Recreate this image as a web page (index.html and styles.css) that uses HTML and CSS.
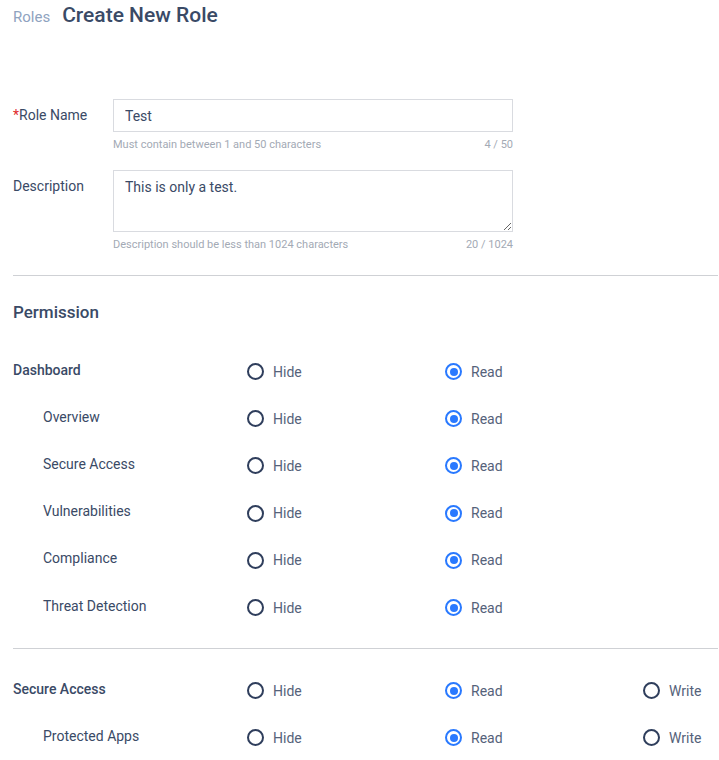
FILE: index.html
```html
<!DOCTYPE html>
<html>
<head>
<meta charset="utf-8">
<link rel="stylesheet" href="styles.css">
</head>
<body>
<div class="page">
  <div class="crumbs">
    <span class="crumb-link">Roles</span>
    <h1 class="title">Create New Role</h1>
  </div>

  <form class="form">
    <div class="field">
      <label class="label"><span class="req">*</span>Role Name</label>
      <div class="control">
        <input class="input" type="text" value="Test">
        <div class="help"><span>Must contain between 1 and 50 characters</span><span>4 / 50</span></div>
      </div>
    </div>
    <div class="field field-desc">
      <label class="label">Description</label>
      <div class="control">
        <textarea class="textarea">This is only a test.</textarea>
        <div class="help"><span>Description should be less than 1024 characters</span><span>20 / 1024</span></div>
      </div>
    </div>
  </form>

  <div class="divider"></div>

  <h2 class="perm-title">Permission</h2>

  <div class="perm-group">
    <div class="perm-row">
      <div class="perm-label parent">Dashboard</div>
      <div class="opt"><span class="radio"></span>Hide</div>
      <div class="opt"><span class="radio on"></span>Read</div>
    </div>
    <div class="perm-row">
      <div class="perm-label child">Overview</div>
      <div class="opt"><span class="radio"></span>Hide</div>
      <div class="opt"><span class="radio on"></span>Read</div>
    </div>
    <div class="perm-row">
      <div class="perm-label child">Secure Access</div>
      <div class="opt"><span class="radio"></span>Hide</div>
      <div class="opt"><span class="radio on"></span>Read</div>
    </div>
    <div class="perm-row">
      <div class="perm-label child">Vulnerabilities</div>
      <div class="opt"><span class="radio"></span>Hide</div>
      <div class="opt"><span class="radio on"></span>Read</div>
    </div>
    <div class="perm-row">
      <div class="perm-label child">Compliance</div>
      <div class="opt"><span class="radio"></span>Hide</div>
      <div class="opt"><span class="radio on"></span>Read</div>
    </div>
    <div class="perm-row">
      <div class="perm-label child">Threat Detection</div>
      <div class="opt"><span class="radio"></span>Hide</div>
      <div class="opt"><span class="radio on"></span>Read</div>
    </div>
  </div>

  <div class="divider divider-group"></div>

  <div class="perm-group">
    <div class="perm-row">
      <div class="perm-label parent">Secure Access</div>
      <div class="opt"><span class="radio"></span>Hide</div>
      <div class="opt"><span class="radio on"></span>Read</div>
      <div class="opt"><span class="radio"></span>Write</div>
    </div>
    <div class="perm-row">
      <div class="perm-label child">Protected Apps</div>
      <div class="opt"><span class="radio"></span>Hide</div>
      <div class="opt"><span class="radio on"></span>Read</div>
      <div class="opt"><span class="radio"></span>Write</div>
    </div>
  </div>
</div>
</body>
</html>
```

FILE: styles.css
```css
* { box-sizing: border-box; }
html, body { margin: 0; padding: 0; background: #fff; }
body {
  font-family: Roboto, "Liberation Sans", sans-serif;
  color: #3a4a66;
  font-size: 14px;
  overflow: hidden;
}
.page { padding: 0 1px 0 13px; }

.crumbs {
  display: flex;
  align-items: baseline;
  gap: 12px;
  height: 32px;
  padding-top: 3px;
}
.crumb-link { font-size: 15px; color: #8fa3bf; }
.title { margin: 0; font-size: 21px; font-weight: 500; color: #3a4a66; }

.form { padding-top: 67px; }
.field { display: flex; align-items: flex-start; }
.field-desc { margin-top: 13px; }
.label {
  width: 100px;
  flex: none;
  font-size: 14px;
  line-height: 33px;
  color: #3a4a66;
}
.req { color: #e02b2b; }
.control { width: 400px; }
.input, .textarea {
  display: block;
  width: 100%;
  border: 1px solid #d9dbe0;
  border-radius: 0;
  font-family: Roboto, "Liberation Sans", sans-serif;
  font-size: 14px;
  color: #3a4a66;
  padding: 0 11px;
  outline: none;
  background: #fff;
}
.input { height: 33px; }
.textarea { height: 62px; padding-top: 7px; resize: vertical; line-height: 18px; }
.help {
  display: flex;
  justify-content: space-between;
  font-size: 11px;
  color: #a3aab5;
  height: 25px;
  line-height: 26px;
}

.divider { border-top: 1px solid #cfd1d5; margin-top: 18px; }
.perm-title { margin: 25px 0 0; font-size: 17px; font-weight: 500; color: #3a4a66; line-height: 22px; }

.perm-group { padding-top: 25px; }
.divider-group { margin-top: 17px; }
.divider-group + .perm-group { padding-top: 18px; }
.perm-row {
  display: grid;
  grid-template-columns: 234px 198px 198px 1fr;
  align-items: center;
  height: 47.2px;
}
.perm-label { font-size: 14px; margin-top: -4px; }
.perm-label.parent { font-weight: 500; }
.perm-label.child { padding-left: 30px; }
.opt { display: flex; align-items: center; gap: 9px; color: #55627a; font-size: 14px; }
.radio {
  width: 17px;
  height: 17px;
  border: 2px solid #2f3e5c;
  border-radius: 50%;
  flex: none;
  position: relative;
}
.radio.on { border-color: #2979ff; }
.radio.on::after {
  content: "";
  position: absolute;
  left: 2.5px; top: 2.5px;
  width: 8px; height: 8px;
  border-radius: 50%;
  background: #2979ff;
}
```
